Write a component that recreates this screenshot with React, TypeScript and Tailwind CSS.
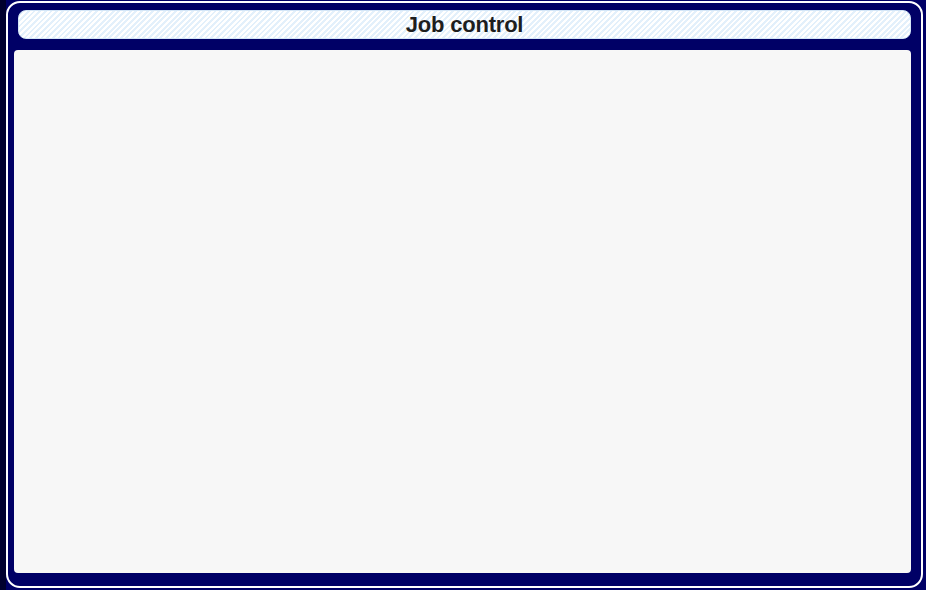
export default function App() {
  return (
    <div className="flex h-[590px] w-[926px] bg-[#000066] font-['Liberation_Sans',Arial,sans-serif]">
      {/* Left edge strip */}
      <div className="w-[6px] shrink-0 bg-[#00002e]" />

      <div className="flex flex-1 pt-px pr-[3px] pb-[2px]">
        <div className="flex flex-1 flex-col rounded-[14px] border-2 border-white pt-[7px] pb-[13px] pl-[6px] pr-[10px]">
          {/* Title bar */}
          <div className="ml-[4px] flex h-[29px] items-center justify-center rounded-[8px] border border-[#d4e6f7] bg-[repeating-linear-gradient(135deg,#ffffff_0px,#ffffff_2px,#e3f0fb_2px,#e3f0fb_4px)]">
            <span className="text-[22px] font-bold leading-none tracking-[-0.2px] text-[#1e1e1e]">Job control</span>
          </div>

          {/* Content panel */}
          <div className="mt-[11px] flex-1 rounded-[4px] bg-[#f7f7f7]" />
        </div>
      </div>
    </div>
  );
}
